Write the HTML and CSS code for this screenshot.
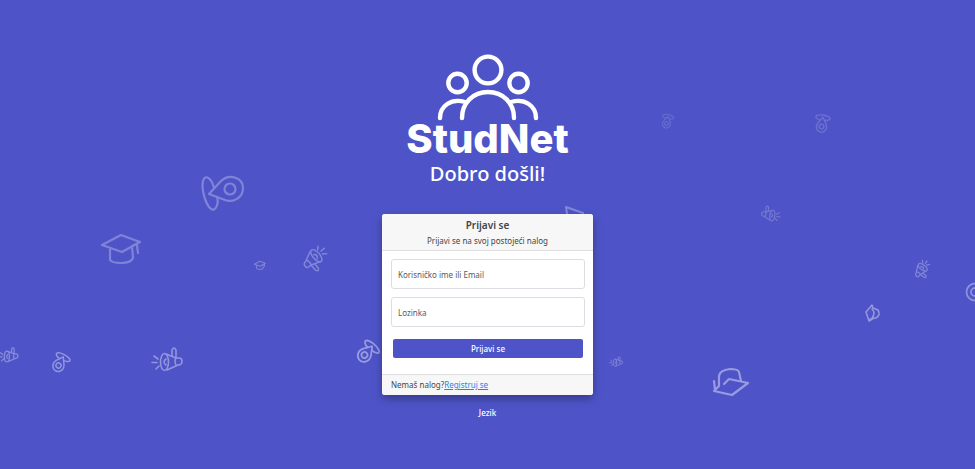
FILE: index.html
```html
<!DOCTYPE html>
<html lang="sr-Latn">
<head>
<meta charset="utf-8">
<meta name="viewport" content="width=device-width, initial-scale=1">
<title>StudNet</title>
<link rel="stylesheet" href="styles.css">
</head>
<body>
<svg class="backdrop" viewBox="0 0 975 469" preserveAspectRatio="xMidYMid slice" aria-hidden="true">
  <defs>
    <!-- Mortarboard, 40 x 30 -->
    <g id="cap">
      <path d="M1 11 20 1 39 8 21 18Z M9 15V26Q11 29 20 29 30 29 32 24L31 12 37 9M21 18 28 14M36 11 37 19"/>
    </g>
    <!-- Whistle, 42 x 36, bowl centred on 28 13 -->
    <g id="whistle">
      <path d="M7 18 19 5C28-3 41 2 41 12 41 22 31 27 23 24Z"/>
      <circle cx="28" cy="13" r="5.500"/>
      <path d="M12 12C10 3 3-3 1 5-1 14 4 29 9 33 14 36 17 27 15 21"/>
    </g>
    <!-- Megaphone facing left, 30 x 24, bell centred on 13 15 -->
    <g id="megaphone">
      <ellipse cx="12.500" cy="15" rx="4" ry="8.500"/>
      <path d="M14 7 24 11H27Q30 11 30 14 30 18 26 18L15 23M24 11Q22 14 24 18M20 9V3Q22-1 24 3V11M14 12Q10 15 14 18M2 9 6 12M0 15.500H5M4 22 7 19"/>
    </g>
  </defs>
  <use href="#cap" transform="translate(101 234)" stroke-width="2.200" opacity=".28"/>
  <use href="#whistle" transform="translate(202 176)" stroke-width="2.200" opacity=".28"/>
  <use href="#cap" transform="translate(254 261) scale(.29)" stroke-width="3.500" opacity=".28"/>
  <use href="#megaphone" transform="translate(316 256) rotate(139) scale(.88) translate(-13 -15)" stroke-width="1.600" opacity=".3"/>
  <use href="#megaphone" transform="translate(152 347)" stroke-width="1.600" opacity=".38"/>
  <use href="#megaphone" transform="translate(-1 347) scale(.63)" stroke-width="2" opacity=".32"/>
  <use href="#whistle" transform="translate(58.500 365.500) rotate(132) scale(.46) translate(-28 -13)" stroke-width="3.200" opacity=".38"/>
  <use href="#whistle" transform="translate(364.500 355) rotate(145) scale(.54) translate(-28 -13)" stroke-width="3.200" opacity=".42"/>
  <use href="#whistle" transform="translate(666.500 123.500) rotate(116) scale(.34) translate(-28 -13)" stroke-width="3.500" opacity=".13"/>
  <use href="#whistle" transform="translate(821.500 126.500) rotate(112) scale(.43) translate(-28 -13)" stroke-width="3.200" opacity=".16"/>
  <use href="#megaphone" transform="translate(772 215.500) rotate(8) scale(-.62 .62) translate(-13 -15)" stroke-width="2" opacity=".2"/>
  <use href="#megaphone" transform="translate(922.500 267.500) rotate(127) scale(.62) translate(-13 -15)" stroke-width="2" opacity=".28"/>
  <use href="#megaphone" transform="translate(609.500 356) scale(.44)" stroke-width="2.200" opacity=".26"/>
  <path opacity=".42" stroke-width="2.200" d="M748 383 732 395 714 391 719 386V376Q720 370 730 369 738 369 739 372L741 381M724 384 729 379 748 383M714 381 715 390"/>
  <g opacity=".4" stroke-width="1.500">
    <path d="M872 305 866 312 869 321 874 318M872 305 873 308 878 310Q881 315 876 318L870 319M872 309Q876 313 872 318"/>
  </g>
  <g opacity=".35" stroke-width="1.800">
    <circle cx="975" cy="292" r="8.500"/><circle cx="975" cy="292" r="4"/>
  </g>
  <path opacity=".3" stroke-width="2" d="M568 220 566 207 583 213V220"/>
</svg>

<main class="page">
  <header class="brand">
    <svg class="brand-mark" viewBox="0 0 102 67" aria-hidden="true">
      <circle cx="51" cy="16" r="13.400"/>
      <circle cx="20.500" cy="29" r="9.200"/>
      <circle cx="81.500" cy="29" r="9.200"/>
      <path d="M25 64C25 49 36 38 51 38S77 49 77 64M3 64C3 52 14 44 28 48M99 64C99 52 88 44 74 48"/>
    </svg>
    <div class="brand-name">StudNet</div>
    <h1 class="welcome">Dobro došli!</h1>
  </header>

  <form class="card">
    <div class="card-header">
      <h2 class="card-title">Prijavi se</h2>
      <p class="card-subtitle">Prijavi se na svoj postojeći nalog</p>
    </div>
    <div class="card-body">
      <input class="field" type="text" placeholder="Korisničko ime ili Email" aria-label="Korisničko ime ili Email">
      <input class="field" type="password" placeholder="Lozinka" aria-label="Lozinka">
      <button class="submit" type="submit">Prijavi se</button>
    </div>
    <div class="card-footer">Nemaš nalog?<a href="#">Registruj se</a></div>
  </form>

  <button class="language" type="button">Jezik</button>
</main>
</body>
</html>
```
FILE: styles.css
```css
* {
  box-sizing: border-box;
}

body {
  margin: 0;
  min-height: 100vh;
  background: #4e54c8;
  color: #424649;
  font-family: "Noto Sans", "Open Sans", sans-serif;
  font-size: 8px;
  line-height: 12px;
}

.backdrop {
  position: absolute;
  inset: 0;
  width: 100%;
  height: 100%;
  fill: none;
  stroke: #fff;
  stroke-linecap: round;
  stroke-linejoin: round;
}

.page {
  position: relative;
  display: flex;
  flex-direction: column;
  align-items: center;
  padding: 54px 16px 40px;
}

.brand {
  display: flex;
  flex-direction: column;
  align-items: center;
  color: #fff;
}

.brand-mark {
  width: 102px;
  fill: none;
  stroke: #fff;
  stroke-width: 4.4;
  stroke-linecap: round;
}

.brand-name {
  font-family: Inter, sans-serif;
  font-size: 40px;
  font-weight: 800;
  line-height: 36px;
}

.welcome {
  margin: 4px 0 0;
  font-size: 20px;
  font-weight: 500;
  line-height: 26px;
}

.card {
  width: 100%;
  max-width: 211px;
  margin-top: 27px;
  overflow: hidden;
  border-radius: 3px;
  background: #fff;
  box-shadow: 0 4px 10px rgba(0, 0, 0, 0.3);
}

.card-header {
  padding: 4px 9px 3px;
  border-bottom: 1px solid #dfdfdf;
  background: #f7f7f7;
  text-align: center;
}

.card-title {
  margin: 0;
  font-size: 10px;
  font-weight: 600;
  line-height: 14px;
}

.card-subtitle {
  margin: 3px 0 0;
  line-height: 12px;
}

.card-body {
  display: flex;
  flex-direction: column;
  gap: 8px;
  padding: 8px 8px 16px 9px;
}

.field {
  width: 100%;
  height: 30px;
  padding: 0 6px;
  border: 1px solid #dadee2;
  border-radius: 3px;
  background: #fff;
  color: inherit;
  font: inherit;
}

.field::placeholder {
  color: #55595d;
  opacity: 1;
}

.submit {
  height: 19px;
  margin: 4px 2px 0;
  padding: 0;
  border: 0;
  border-radius: 2px;
  background: #4e54c8;
  color: #fff;
  font: inherit;
  font-weight: 500;
}

.card-footer {
  padding: 4px 9px;
  border-top: 1px solid #dfdfdf;
  background: #f7f7f7;
}

.card-footer a {
  color: #2680f5;
}

.language {
  margin-top: 12px;
  padding: 0;
  border: 0;
  background: none;
  color: #fff;
  font: inherit;
  font-weight: 500;
}
```
